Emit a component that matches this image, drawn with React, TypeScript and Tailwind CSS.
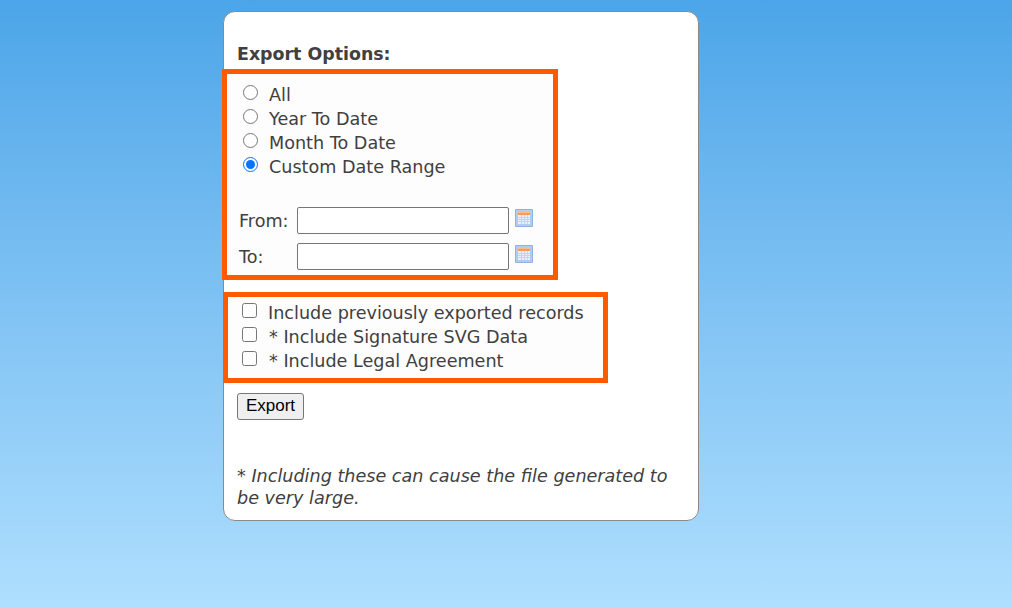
const RANGES = [
  { label: 'All', checked: false },
  { label: 'Year To Date', checked: false },
  { label: 'Month To Date', checked: false },
  { label: 'Custom Date Range', checked: true },
];

const EXTRAS = [
  { label: 'Include previously exported records', gap: 'ml-[11px]' },
  { label: '* Include Signature SVG Data', gap: 'ml-[12px]' },
  { label: '* Include Legal Agreement', gap: 'ml-[12px]' },
];

function CalendarIcon() {
  return (
    <svg width="18" height="18" viewBox="0 0 18 18" className="shrink-0">
      <rect x="0" y="0" width="18" height="18" rx="1" fill="#8fb2e2" />
      <rect x="1" y="1" width="16" height="16" fill="#b3cbec" />
      <rect x="3" y="3" width="12" height="3" fill="#fb9a58" />
      <rect x="3" y="3" width="12" height="1" fill="#fdb98a" />
      <rect x="3" y="6" width="12" height="9" fill="#e9f0f9" />
      <path d="M3 8.5h12M3 10.5h12M3 12.5h12M6.5 6v9M9.5 6v9M12.5 6v9" stroke="#c4d4ea" strokeWidth="1" fill="none" />
    </svg>
  );
}

function DateRow({ label, mt }: { label: string; mt: string }) {
  return (
    <div className={`flex items-center ${mt}`}>
      <span className="w-[58px] text-[17.6px] leading-[24px]">{label}</span>
      <input type="text" className="h-[27px] w-[212px] rounded-[2px] border border-[#767676] bg-white" />
      <span className="ml-[6px] -mt-[5px]">
        <CalendarIcon />
      </span>
    </div>
  );
}

export default function App() {
  return (
    <div className="min-h-[608px] bg-gradient-to-b from-[#4ba5e8] to-[#afdffe] pt-[11px] pb-[87px] pl-[223px] font-['DejaVu_Sans',sans-serif] text-[#404040]">
      <div className="h-[510px] w-[476px] rounded-[12px] border border-[#8a8a8a] bg-white">
        <h2 className="ml-[13px] mt-[30px] text-[17.4px] font-bold leading-[24px]">Export Options:</h2>

        <div className="-ml-[2px] mt-[3px] h-[211px] w-[336px] border-[5px] border-[#ff5a00] bg-[#fdfdfd] pl-[16px] pt-[9px]">
          {RANGES.map((r) => (
            <label key={r.label} className="flex h-[24px] items-center">
              <input type="radio" name="range" defaultChecked={r.checked} className="m-0 -mt-[6px] h-[15px] w-[15px]" />
              <span className="ml-[11px] text-[17.6px] leading-[24px]">{r.label}</span>
            </label>
          ))}
          <div className="-ml-[4px]">
            <DateRow label="From:" mt="mt-[28px]" />
            <DateRow label="To:" mt="mt-[9px]" />
          </div>
        </div>

        <div className="-ml-[1px] mt-[12px] h-[91px] w-[385px] border-[5px] border-[#ff5a00] bg-[#fdfdfd] pl-[14px] pt-[4px]">
          {EXTRAS.map((e) => (
            <label key={e.label} className="flex h-[24px] items-center">
              <input type="checkbox" className="m-0 -mt-[6px] h-[15px] w-[15px]" />
              <span className={`${e.gap} text-[17.6px] leading-[24px]`}>{e.label}</span>
            </label>
          ))}
        </div>

        <button className="ml-[13px] mt-[10px] block h-[27px] w-[67px] rounded-[3px] border border-[#767676] bg-[#efefef] pb-[2px] font-['Liberation_Sans',sans-serif] text-[17px] leading-[20px] text-black">
          Export
        </button>

        <p className="ml-[13px] mt-[45px] w-[440px] text-[17.6px] italic leading-[22px]">
          * Including these can cause the file generated to be very large.
        </p>
      </div>
    </div>
  );
}
